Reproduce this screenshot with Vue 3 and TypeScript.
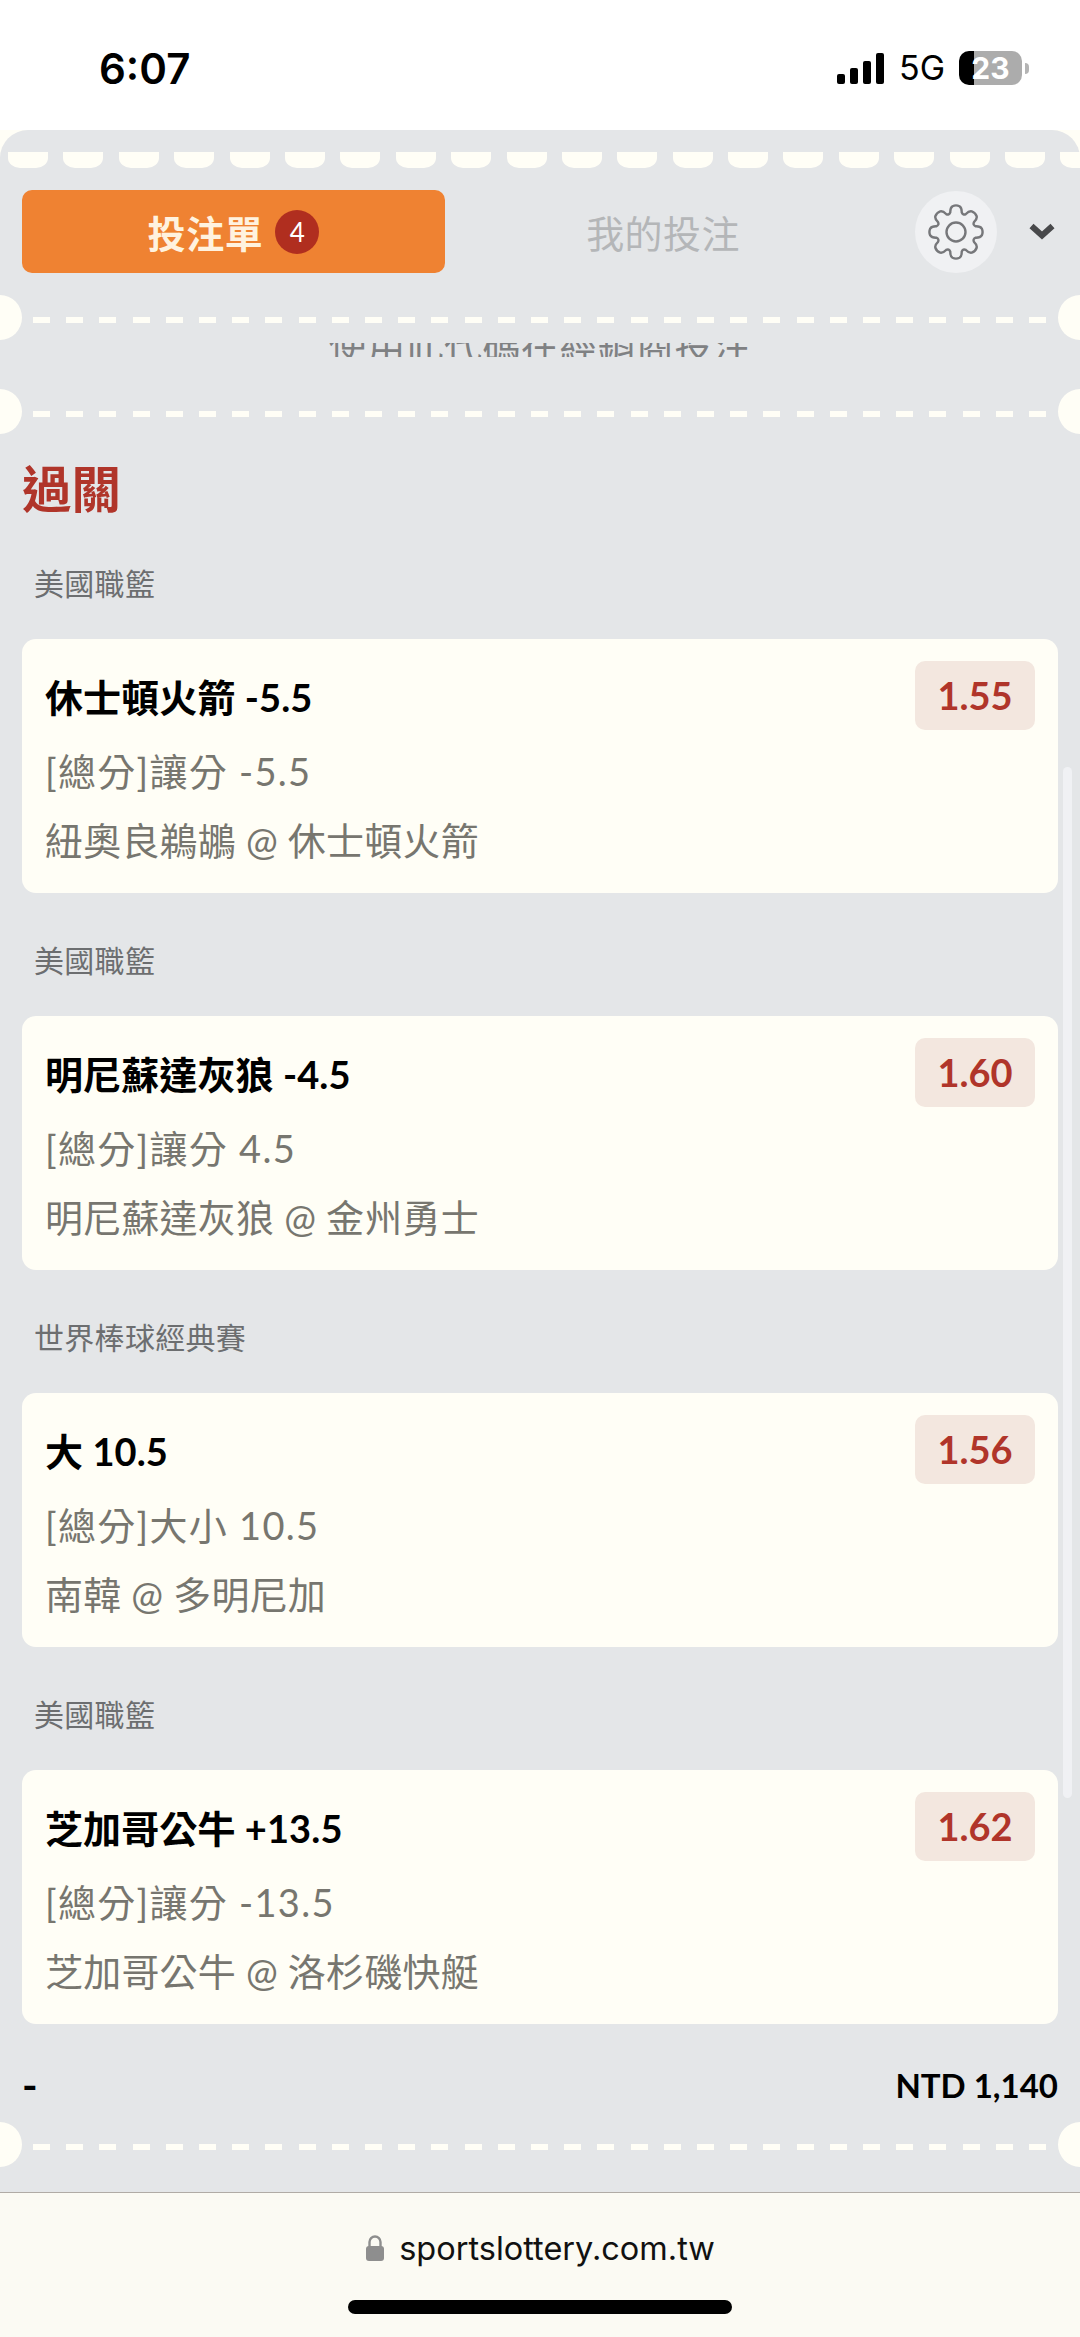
<script setup lang="ts">
interface Bet { league: string; title: string; market: string; match: string; odds: string }
const bets: Bet[] = [
  { league: '美國職籃', title: '休士頓火箭 -5.5', market: '[總分]讓分 -5.5', match: '紐奧良鵜鶘 @ 休士頓火箭', odds: '1.55' },
  { league: '美國職籃', title: '明尼蘇達灰狼 -4.5', market: '[總分]讓分 4.5', match: '明尼蘇達灰狼 @ 金州勇士', odds: '1.60' },
  { league: '世界棒球經典賽', title: '大 10.5', market: '[總分]大小 10.5', match: '南韓 @ 多明尼加', odds: '1.56' },
  { league: '美國職籃', title: '芝加哥公牛 +13.5', market: '[總分]讓分 -13.5', match: '芝加哥公牛 @ 洛杉磯快艇', odds: '1.62' },
]
const gearPath = (() => {
  const pts: string[] = []
  const teeth = 8
  const R = 26
  const r = 19.5
  const pt = (a: number, rad: number) => `${(32 + rad * Math.sin(a)).toFixed(2)} ${(32 - rad * Math.cos(a)).toFixed(2)}`
  const step = (Math.PI * 2) / teeth
  for (let i = 0; i < teeth; i++) {
    const c = i * step
    pts.push(`${i === 0 ? 'M' : 'L'}${pt(c - step * 0.17, R)}`)
    pts.push(`Q${pt(c, R + 1.4)} ${pt(c + step * 0.17, R)}`)
    pts.push(`Q${pt(c + step * 0.3, R - 1)} ${pt(c + step * 0.36, r + 1)}`)
    pts.push(`Q${pt(c + step * 0.5, r - 1.5)} ${pt(c + step * 0.64, r + 1)}`)
    pts.push(`Q${pt(c + step * 0.7, R - 1)} ${pt(c + step * 0.83, R)}`)
  }
  return pts.join(' ') + ' Z'
})()
</script>

<template>
  <div class="page">
    <header class="status">
      <span class="time">6:07</span>
      <div class="status-right">
        <div class="signal"><i class="b1"></i><i class="b2"></i><i class="b3"></i><i class="b4"></i></div>
        <span class="net">5G</span>
        <div class="battery">23</div>
        <span class="nub"></span>
      </div>
    </header>

    <main class="panel">
      <div class="scallops"><i v-for="n in 20" :key="n"></i></div>

      <div class="tabs">
        <div class="tab-active">
          <span>投注單</span>
          <span class="badge">4</span>
        </div>
        <div class="tab-idle">我的投注</div>
        <div class="gear">
          <svg width="64" height="64" viewBox="0 0 64 64" fill="none" stroke="#76777a" stroke-width="2.4" stroke-linejoin="round">
            <path :d="gearPath" />
            <circle cx="32" cy="32" r="9.5" />
          </svg>
        </div>
        <svg class="chev" width="26" height="18" viewBox="0 0 26 18" fill="none" stroke="#48494b" stroke-width="6">
          <path d="M2.5 3l10.500 9.500L23.500 3" />
        </svg>
      </div>

      <div class="divider first"></div>
      <div class="clip"><div class="clip-window"><span>使用此代碼在經銷商投注</span></div></div>
      <div class="divider"></div>

      <h2 class="section">過關</h2>

      <section v-for="(b, i) in bets" :key="i" class="bet">
        <div class="league">{{ b.league }}</div>
        <div class="card">
          <div class="card-head">
            <div class="title">{{ b.title }}</div>
            <div class="odds">{{ b.odds }}</div>
          </div>
          <div class="line market">{{ b.market }}</div>
          <div class="line match">{{ b.match }}</div>
        </div>
      </section>

      <div class="total">
        <span class="dash">-</span>
        <span>NTD 1,140</span>
      </div>
      <div class="divider last"></div>
      <div class="scroll"></div>
    </main>

    <footer class="browser">
      <div class="url">
        <svg width="20" height="26" viewBox="0 0 20 26">
          <path d="M4.500 12V7a5.500 5.500 0 0 1 11 0v5" fill="none" stroke="#8e8e8e" stroke-width="2.400" />
          <rect x="1" y="11" width="18" height="15" rx="3" fill="#8e8e8e" />
        </svg>
        <span>sportslottery.com.tw</span>
      </div>
      <div class="home"></div>
    </footer>
  </div>
</template>

<style>
html, body { margin: 0; background: #fffef6; }
</style>

<style scoped>
.page {
  width: 1080px;
  height: 2337px;
  display: flex;
  flex-direction: column;
  overflow: hidden;
  background: #fffef6;
  font-family: Lato, "Noto Sans CJK TC", sans-serif;
}
.status {
  height: 130px;
  flex: none;
  background: #fff;
  display: flex;
  justify-content: space-between;
  align-items: flex-start;
  padding: 0 51px 0 99px;
  box-sizing: border-box;
}
.time {
  font-family: Inter, sans-serif;
  font-size: 42px;
  font-weight: 600;
  line-height: 50px;
  margin-top: 44px;
  color: #000;
}
.status-right { display: flex; align-items: center; margin-top: 51px; height: 34px; }
.signal { display: flex; align-items: flex-end; gap: 5px; height: 31px; }
.signal i { display: block; width: 8px; background: #000; border-radius: 2px; }
.b1 { height: 10px; }
.b2 { height: 16px; }
.b3 { height: 23px; }
.b4 { height: 31px; }
.net {
  font-family: Inter, sans-serif;
  font-size: 34px;
  font-weight: 400;
  margin-left: 15px;
  color: #000;
  width: 46px;
  line-height: 34px;
}
.battery {
  width: 63px;
  height: 34px;
  margin-left: 14px;
  border-radius: 10px;
  background: linear-gradient(90deg, #000 15px, #acacac 15px);
  color: #fff;
  font-family: Inter, sans-serif;
  font-size: 30px;
  font-weight: 700;
  line-height: 34px;
  text-align: center;
}
.nub { width: 4px; height: 11px; margin-left: 3px; border-radius: 0 4px 4px 0; background: #b4b4b4; }

.panel {
  flex: none;
  height: 2063px;
  box-sizing: border-box;
  position: relative;
  background: #e4e6e8;
  border-radius: 28px 28px 0 0;
  border-bottom: 1px solid #b0aba5;
  padding-top: 22px;
}
.scallops {
  display: flex;
  gap: 15.4px;
  padding-left: 8px;
  height: 16px;
  overflow: hidden;
}
.scallops i {
  flex: none;
  width: 40px;
  height: 16px;
  background: #fffef6;
  border-radius: 0 0 12px 12px / 0 0 10px 10px;
}
.tabs {
  display: flex;
  align-items: center;
  margin-top: 22px;
  padding-left: 22px;
  height: 83px;
}
.tab-active {
  width: 423px;
  height: 83px;
  flex: none;
  background: #ef8232;
  border-radius: 10px;
  display: flex;
  align-items: center;
  justify-content: center;
  gap: 12px;
  color: #fff2df;
  font-size: 38px;
  font-weight: 700;
  letter-spacing: 0.6px;
}
.badge {
  width: 44px;
  height: 44px;
  border-radius: 50%;
  background: #b02e1f;
  color: #fff;
  font-size: 26px;
  font-weight: 400;
  line-height: 44px;
  text-align: center;
  letter-spacing: 0;
}
.tab-idle {
  width: 436px;
  flex: none;
  text-align: center;
  font-size: 38px;
  font-weight: 400;
  letter-spacing: 0.4px;
  color: #b4b6b8;
}
.gear {
  width: 82px;
  height: 82px;
  flex: none;
  margin-left: 34px;
  border-radius: 50%;
  background: #f0f1f3;
  display: flex;
  align-items: center;
  justify-content: center;
}
.chev { margin-left: 32px; flex: none; }

.divider {
  position: relative;
  height: 6px;
  margin: 0 33px;
  background: repeating-linear-gradient(90deg, #fffef6 0 17px, transparent 17px 33.2px);
}
.divider::before,
.divider::after {
  content: "";
  position: absolute;
  top: -22px;
  width: 44px;
  height: 45px;
  border-radius: 50%;
  background: #fffef6;
}
.divider::before { left: -55px; }
.divider::after { right: -55px; }
.divider.first { margin-top: 44px; }
.clip {
  height: 88px;
  box-sizing: border-box;
  padding-top: 20px;
}
.clip-window {
  height: 14px;
  overflow: hidden;
  position: relative;
  text-align: center;
  color: #7f8183;
  font-size: 38px;
  letter-spacing: 0.4px;
}
.clip-window span {
  position: absolute;
  left: 0;
  right: 0;
  bottom: -8px;
  line-height: 40px;
}
.section {
  margin: 42px 0 0 22px;
  font-size: 49.5px;
  line-height: 60px;
  font-weight: 700;
  color: #b0352a;
}
.bet { margin: 0 22px; }
.league {
  height: 42px;
  margin: 45px 0 36px;
  padding-left: 12px;
  display: flex;
  align-items: center;
  font-size: 30px;
  letter-spacing: 0.3px;
  color: #6c6e70;
}
.section + .bet .league { margin-top: 42px; }
.card {
  height: 254px;
  box-sizing: border-box;
  background: #fffef6;
  border-radius: 14px;
  padding: 22px 23px 0;
}
.card-head {
  display: flex;
  justify-content: space-between;
  align-items: center;
  height: 69px;
}
.title { font-size: 38px; font-weight: 700; color: #000; letter-spacing: 0.1px; }
.odds {
  width: 120px;
  height: 69px;
  border-radius: 10px;
  background: #f3e7df;
  color: #b0352a;
  font-size: 38px;
  font-weight: 700;
  line-height: 69px;
  text-align: center;
}
.line { font-size: 38px; line-height: 69px; color: #77766f; }
.market { margin-top: 7px; letter-spacing: 1.3px; }
.match { letter-spacing: 0.2px; }
.total {
  display: flex;
  justify-content: space-between;
  align-items: center;
  margin: 31px 22px 0;
  height: 60px;
  font-size: 33px;
  font-weight: 700;
  color: #000;
}
.dash { font-size: 42px; line-height: 60px; }
.divider.last { margin-top: 29px; }
.scroll {
  position: absolute;
  right: 8px;
  top: 637px;
  width: 9px;
  height: 1031px;
  border-radius: 5px;
  background: #f0f1f4;
}
.browser {
  flex: 1;
  background: #fbfaf3;
  display: flex;
  flex-direction: column;
  align-items: center;
}
.url {
  display: flex;
  align-items: center;
  gap: 14px;
  margin-top: 35px;
  height: 40px;
  font-family: Inter, sans-serif;
  font-size: 32.5px;
  color: #111;
}
.home {
  width: 384px;
  height: 14px;
  margin-top: 32px;
  border-radius: 7px;
  background: #000;
}
</style>
